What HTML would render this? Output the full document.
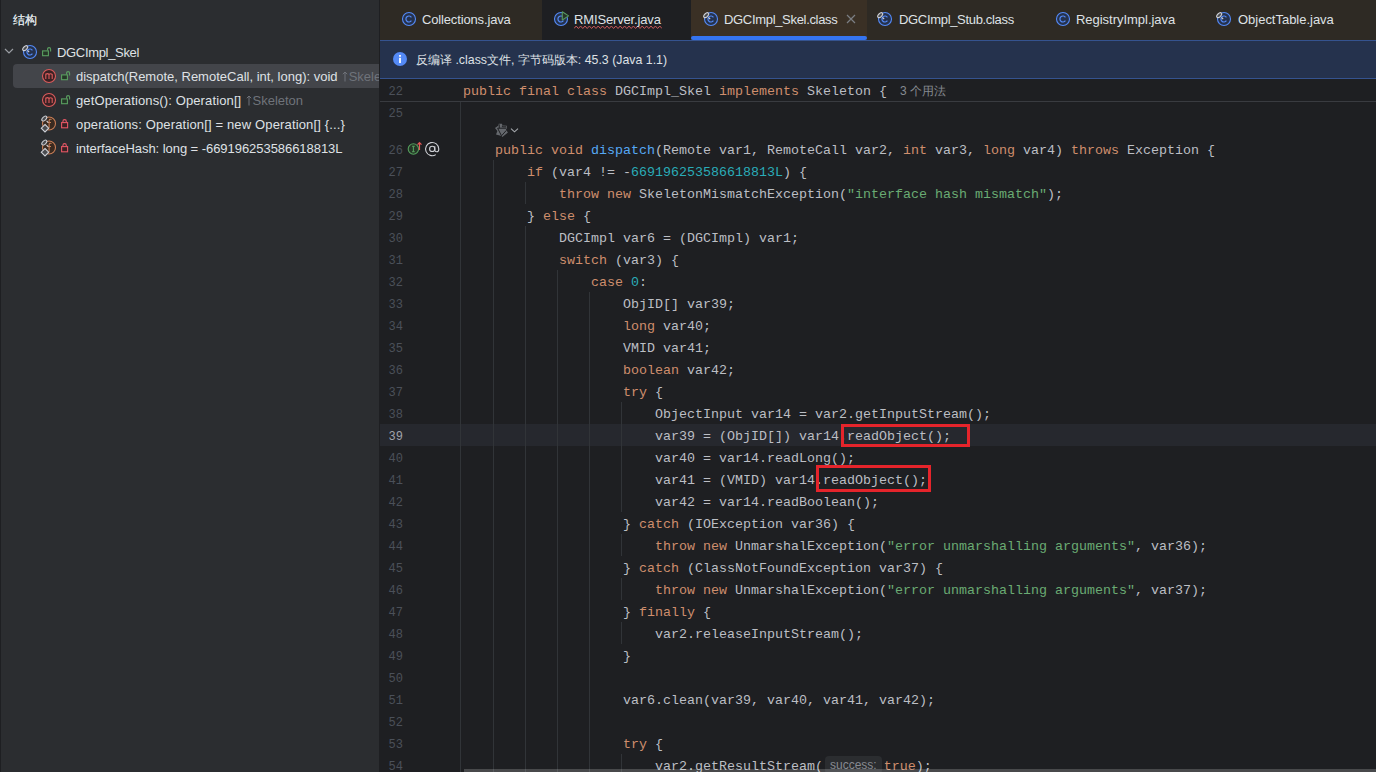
<!DOCTYPE html>
<html><head><meta charset="utf-8">
<style>
*{margin:0;padding:0;box-sizing:border-box}
html,body{width:1376px;height:772px;overflow:hidden;background:#1e1f22}
body{position:relative;font-family:"Liberation Sans",sans-serif}
.abs{position:absolute}
#left{position:absolute;left:0;top:0;width:379px;height:772px;background:#2b2d30;overflow:hidden}
#sep{position:absolute;left:379px;top:0;width:1px;height:772px;background:#1e1f22}
#tabs{position:absolute;left:380px;top:0;width:996px;height:40px;background:#2e2a24}
.tab{position:absolute;top:0;height:40px;font-size:13px;color:#dfe1e5;white-space:nowrap}
.tab .t{position:absolute;top:12px;line-height:15px;letter-spacing:-0.15px}
#banner{position:absolute;left:380px;top:40px;width:996px;height:39px;background:#25324d;border-top:1px solid #35538f;border-bottom:1px solid #35538f}
#editor{position:absolute;left:380px;top:79px;width:996px;height:693px;background:#1e1f22;overflow:hidden}
.ln{position:absolute;left:370px;width:33px;transform:scaleX(0.9);transform-origin:32px 0;text-align:right;font-family:"Liberation Mono",monospace;font-size:13.33px;color:#4b5059;line-height:22px}
.code{position:absolute;font-family:"Liberation Mono",monospace;font-size:13.33px;color:#bcbec4;line-height:22px;white-space:pre}
.k{color:#cf8e6d}.n{color:#2aacb8}.s{color:#6aab73}.m{color:#56a8f5}
.tree{position:absolute;font-size:13px;color:#dfe1e5;white-space:nowrap;line-height:16px}
.gray{color:#6f737a}
.g{position:absolute;width:1px;background:#313438}
.cur{color:#a1a3ab}
.hint{display:inline-block;vertical-align:top;font-family:"Liberation Sans",sans-serif;font-size:12px;color:#878a91;background:#2b2d30;border-radius:4px;padding:0 5.5px 0 5px;margin:0 1.5px 0 2px;line-height:18px}
</style></head><body>
<div id="left">
  <div class="abs" style="left:0;top:0;width:1px;height:772px;background:#1e1f22"></div>
  <div class="abs" style="left:13px;top:12px;font-size:12px;line-height:16px;color:#dfe1e5;text-shadow:0.3px 0 0 #dfe1e5">结构</div>
  <div class="abs" style="left:13px;top:64px;width:366px;height:24px;background:#43454a;border-radius:4px 0 0 4px"></div>
  <div class="tree" style="left:57px;top:45px;letter-spacing:-0.33px">DGCImpl_Skel</div>
  <div class="tree" style="left:76px;top:69px">dispatch(Remote, RemoteCall, int, long): void <span class="gray"><svg width="6" height="11" viewBox="0 0 6 11" style="display:inline-block;vertical-align:-1px;margin-left:1px;margin-right:0.5px"><path d="M3 10.5V1M0.8 3.2L3 1L5.2 3.2" fill="none" stroke="#6f737a" stroke-width="1"/></svg>Skeleton</span></div>
  <div class="tree" style="left:76px;top:93px"><span style="letter-spacing:0.125px">getOperations(): Operation[]</span> <span class="gray"><svg width="6" height="11" viewBox="0 0 6 11" style="display:inline-block;vertical-align:-1px;margin-left:1px;margin-right:0.5px"><path d="M3 10.5V1M0.8 3.2L3 1L5.2 3.2" fill="none" stroke="#6f737a" stroke-width="1"/></svg>Skeleton</span></div>
  <div class="tree" style="left:76px;top:117px;letter-spacing:0.15px">operations: Operation[] = new Operation[] {...}</div>
  <div class="tree" style="left:76px;top:141px;letter-spacing:-0.05px">interfaceHash: long = -669196253586618813L</div>
</div>
<div id="sep"></div>
<svg class="abs" style="left:4px;top:47px" width="10" height="8" viewBox="0 0 10 8"><path d="M1 2L5 6L9 2" fill="none" stroke="#9a9da3" stroke-width="1.2"/></svg>
<svg class="abs" style="left:22px;top:44px" width="18" height="18" viewBox="0 0 18 18"><circle cx="8" cy="8" r="6.5" fill="#25324d" stroke="#548af7" stroke-width="1.1"/><path d="M10.4 6.3A3 3 0 1 0 10.4 9.7" fill="none" stroke="#548af7" stroke-width="1.2"/><ellipse cx="3.2" cy="4.2" rx="3" ry="1.7" transform="rotate(-45 3.2 4.2)" fill="#4a4c50" stroke="#ced0d6" stroke-width="1.1"/><path d="M5.5 6.5L7.2 8.2" stroke="#ced0d6" stroke-width="1.1"/></svg>
<svg class="abs" style="left:42px;top:47px" width="10" height="10" viewBox="0 0 10 10"><rect x="0.6" y="3.9" width="5.8" height="4.8" fill="#253627" stroke="#5a9e60" stroke-width="1.1"/><path d="M5.6 3.6V2.2q0-1.6 1.5-1.6t1.5 1.6V4.4" fill="none" stroke="#5a9e60" stroke-width="1.1"/></svg>
<svg class="abs" style="left:41px;top:68px" width="16" height="16" viewBox="0 0 16 16"><circle cx="8" cy="8" r="6.5" fill="#3b2124" stroke="#db5c5c" stroke-width="1.1"/><path d="M4.8 11V5.5M4.8 6.5q1.6-1.6 3.2 0V11M8 6.5q1.6-1.6 3.2 0V11" fill="none" stroke="#db5c5c" stroke-width="1.1"/></svg>
<svg class="abs" style="left:61px;top:71px" width="10" height="10" viewBox="0 0 10 10"><rect x="0.6" y="3.9" width="5.8" height="4.8" fill="#253627" stroke="#5a9e60" stroke-width="1.1"/><path d="M5.6 3.6V2.2q0-1.6 1.5-1.6t1.5 1.6V4.4" fill="none" stroke="#5a9e60" stroke-width="1.1"/></svg>
<svg class="abs" style="left:41px;top:92px" width="16" height="16" viewBox="0 0 16 16"><circle cx="8" cy="8" r="6.5" fill="#3b2124" stroke="#db5c5c" stroke-width="1.1"/><path d="M4.8 11V5.5M4.8 6.5q1.6-1.6 3.2 0V11M8 6.5q1.6-1.6 3.2 0V11" fill="none" stroke="#db5c5c" stroke-width="1.1"/></svg>
<svg class="abs" style="left:61px;top:95px" width="10" height="10" viewBox="0 0 10 10"><rect x="0.6" y="3.9" width="5.8" height="4.8" fill="#253627" stroke="#5a9e60" stroke-width="1.1"/><path d="M5.6 3.6V2.2q0-1.6 1.5-1.6t1.5 1.6V4.4" fill="none" stroke="#5a9e60" stroke-width="1.1"/></svg>
<svg class="abs" style="left:40px;top:115px" width="18" height="20" viewBox="0 0 18 20"><circle cx="9" cy="8.5" r="6.5" fill="#3a2a20" stroke="#c77d55" stroke-width="1.1"/><path d="M11.5 4.5q-2-0.8-2.4 1V13M7.5 7.5h3.5" fill="none" stroke="#c77d55" stroke-width="1.1"/><ellipse cx="4.3" cy="3.6" rx="3" ry="1.7" transform="rotate(-45 4.3 3.6)" fill="#4a4c50" stroke="#ced0d6" stroke-width="1.1"/><path d="M6.6 5.9L8.3 7.6" stroke="#ced0d6" stroke-width="1.1"/><path d="M5 9.5L8.7 13.2L5 16.9L1.3 13.2Z" fill="#4a4c50" stroke="#ced0d6" stroke-width="1.1"/></svg>
<svg class="abs" style="left:61px;top:119px" width="8" height="10" viewBox="0 0 8 10"><rect x="0.6" y="3.6" width="6" height="5.2" fill="#3b2124" stroke="#e55765" stroke-width="1.1"/><path d="M1.9 3.6V2.4q0-1.8 1.7-1.8t1.7 1.8V3.6" fill="none" stroke="#e55765" stroke-width="1.1"/></svg>
<svg class="abs" style="left:40px;top:139px" width="18" height="20" viewBox="0 0 18 20"><circle cx="9" cy="8.5" r="6.5" fill="#3a2a20" stroke="#c77d55" stroke-width="1.1"/><path d="M11.5 4.5q-2-0.8-2.4 1V13M7.5 7.5h3.5" fill="none" stroke="#c77d55" stroke-width="1.1"/><ellipse cx="4.3" cy="3.6" rx="3" ry="1.7" transform="rotate(-45 4.3 3.6)" fill="#4a4c50" stroke="#ced0d6" stroke-width="1.1"/><path d="M6.6 5.9L8.3 7.6" stroke="#ced0d6" stroke-width="1.1"/><path d="M5 9.5L8.7 13.2L5 16.9L1.3 13.2Z" fill="#4a4c50" stroke="#ced0d6" stroke-width="1.1"/></svg>
<svg class="abs" style="left:61px;top:143px" width="8" height="10" viewBox="0 0 8 10"><rect x="0.6" y="3.6" width="6" height="5.2" fill="#3b2124" stroke="#e55765" stroke-width="1.1"/><path d="M1.9 3.6V2.4q0-1.8 1.7-1.8t1.7 1.8V3.6" fill="none" stroke="#e55765" stroke-width="1.1"/></svg>
<div id="tabs">
  <div class="tab" style="left:162px;width:149px;background:#1e1f22"></div>
  <div class="tab" style="left:311px;width:176px;background:#3a3025"></div>
  <div class="abs" style="left:311px;top:36px;width:176px;height:4px;background:#3574f0;border-radius:2px"></div>
  <svg class="abs" style="left:466px;top:14px" width="10" height="10" viewBox="0 0 10 10"><path d="M1 1L9 9M9 1L1 9" stroke="#7b7e84" stroke-width="1.2"/></svg>
<svg class="abs" style="left:194px;top:25px" width="88" height="5" viewBox="0 0 88 5"><path d="M0 3.5L2.2 1L4.4 3.5L6.6 1L8.8 3.5L11.0 1L13.2 3.5L15.4 1L17.6 3.5L19.8 1L22.0 3.5L24.2 1L26.4 3.5L28.6 1L30.8 3.5L33.0 1L35.2 3.5L37.4 1L39.6 3.5L41.8 1L44.0 3.5L46.2 1L48.4 3.5L50.6 1L52.8 3.5L55.0 1L57.2 3.5L59.4 1L61.6 3.5L63.8 1L66.0 3.5L68.2 1L70.4 3.5L72.6 1L74.8 3.5L77.0 1L79.2 3.5L81.4 1L83.6 3.5L85.8 1L88.0 3.5" fill="none" stroke="#c9585a" stroke-width="1"/></svg>
  <div class="tab" style="left:42px"><span class="t">Collections.java</span></div>
  <div class="tab" style="left:194px"><span class="t">RMIServer.java</span></div>
  <div class="tab" style="left:344px"><span class="t" style="letter-spacing:-0.32px">DGCImpl_Skel.class</span></div>
  <div class="tab" style="left:519px"><span class="t" style="letter-spacing:-0.32px">DGCImpl_Stub.class</span></div>
  <div class="tab" style="left:696px"><span class="t" style="letter-spacing:-0.03px">RegistryImpl.java</span></div>
  <div class="tab" style="left:858px"><span class="t" style="letter-spacing:-0.02px">ObjectTable.java</span></div>
</div>
<svg class="abs" style="left:401px;top:11px" width="18" height="18" viewBox="0 0 18 18"><circle cx="8" cy="8" r="6.5" fill="#25324d" stroke="#548af7" stroke-width="1.1"/><path d="M10.4 6.3A3 3 0 1 0 10.4 9.7" fill="none" stroke="#548af7" stroke-width="1.2"/></svg>
<svg class="abs" style="left:553px;top:11px" width="18" height="18" viewBox="0 0 18 18"><circle cx="8" cy="8" r="6.5" fill="#25324d" stroke="#548af7" stroke-width="1.1"/><path d="M10.4 6.3A3 3 0 1 0 10.4 9.7" fill="none" stroke="#548af7" stroke-width="1.2"/><path d="M9.3 0.8L15.6 4.9L9.3 9Z" fill="#263428" stroke="#57965c" stroke-width="1.1" stroke-linejoin="round"/></svg>
<svg class="abs" style="left:703px;top:11px" width="18" height="18" viewBox="0 0 18 18"><circle cx="8" cy="8" r="6.5" fill="#25324d" stroke="#548af7" stroke-width="1.1"/><path d="M10.4 6.3A3 3 0 1 0 10.4 9.7" fill="none" stroke="#548af7" stroke-width="1.2"/><ellipse cx="3.2" cy="4.2" rx="3" ry="1.7" transform="rotate(-45 3.2 4.2)" fill="#4a4c50" stroke="#ced0d6" stroke-width="1.1"/><path d="M5.5 6.5L7.2 8.2" stroke="#ced0d6" stroke-width="1.1"/></svg>
<svg class="abs" style="left:877px;top:11px" width="18" height="18" viewBox="0 0 18 18"><circle cx="8" cy="8" r="6.5" fill="#25324d" stroke="#548af7" stroke-width="1.1"/><path d="M10.4 6.3A3 3 0 1 0 10.4 9.7" fill="none" stroke="#548af7" stroke-width="1.2"/><ellipse cx="3.2" cy="4.2" rx="3" ry="1.7" transform="rotate(-45 3.2 4.2)" fill="#4a4c50" stroke="#ced0d6" stroke-width="1.1"/><path d="M5.5 6.5L7.2 8.2" stroke="#ced0d6" stroke-width="1.1"/></svg>
<svg class="abs" style="left:1055px;top:11px" width="18" height="18" viewBox="0 0 18 18"><circle cx="8" cy="8" r="6.5" fill="#25324d" stroke="#548af7" stroke-width="1.1"/><path d="M10.4 6.3A3 3 0 1 0 10.4 9.7" fill="none" stroke="#548af7" stroke-width="1.2"/></svg>
<svg class="abs" style="left:1216px;top:11px" width="18" height="18" viewBox="0 0 18 18"><circle cx="8" cy="8" r="6.5" fill="#25324d" stroke="#548af7" stroke-width="1.1"/><path d="M10.4 6.3A3 3 0 1 0 10.4 9.7" fill="none" stroke="#548af7" stroke-width="1.2"/><ellipse cx="3.2" cy="4.2" rx="3" ry="1.7" transform="rotate(-45 3.2 4.2)" fill="#4a4c50" stroke="#ced0d6" stroke-width="1.1"/><path d="M5.5 6.5L7.2 8.2" stroke="#ced0d6" stroke-width="1.1"/></svg>
<div id="banner">
  <svg class="abs" style="left:13px;top:11px" width="14" height="14" viewBox="0 0 14 14"><circle cx="7" cy="7" r="7" fill="#548af7"/><rect x="6.1" y="3" width="1.8" height="1.8" fill="#fff"/><rect x="6.1" y="5.8" width="1.8" height="5.2" fill="#fff"/></svg>
  <div class="abs" style="left:36px;top:11px;font-size:12.35px;color:#dfe1e5;white-space:nowrap">反编译 .class文件, 字节码版本: 45.3 (Java 1.1)</div>
</div>
<div class="abs" style="left:380px;top:424px;width:996px;height:22px;background:#26282e"></div>
<div class="abs" style="left:380px;top:101px;width:996px;height:1px;background:#393b40"></div>
<div class="g" style="left:460px;top:102px;height:670px"></div>
<div class="g" style="left:493px;top:160px;height:612px"></div>
<div class="g" style="left:525px;top:182px;height:22px"></div>
<div class="g" style="left:525px;top:226px;height:546px"></div>
<div class="g" style="left:557px;top:270px;height:502px"></div>
<div class="g" style="left:589px;top:292px;height:480px"></div>
<div class="g" style="left:621px;top:402px;height:110px"></div>
<div class="g" style="left:621px;top:534px;height:22px"></div>
<div class="g" style="left:621px;top:578px;height:22px"></div>
<div class="g" style="left:621px;top:622px;height:22px"></div>
<div class="g" style="left:621px;top:754px;height:18px"></div>
<div class="ln" style="top:81px">22</div>
<div class="code" style="top:81px;left:463px"><span class="k">public final class</span> DGCImpl_Skel <span class="k">implements</span> Skeleton {</div>
<div class="ln" style="top:103px">25</div>
<div class="ln" style="top:140px">26</div>
<div class="code" style="top:140px;left:495px"><span class="k">public void</span> <span class="m">dispatch</span>(Remote var1, RemoteCall var2, <span class="k">int</span> var3, <span class="k">long</span> var4) <span class="k">throws</span> Exception {</div>
<div class="ln" style="top:162px">27</div>
<div class="code" style="top:162px;left:527px"><span class="k">if</span> (var4 != -<span class="n">669196253586618813L</span>) {</div>
<div class="ln" style="top:184px">28</div>
<div class="code" style="top:184px;left:559px"><span class="k">throw new</span> SkeletonMismatchException(<span class="s">"interface hash mismatch"</span>);</div>
<div class="ln" style="top:206px">29</div>
<div class="code" style="top:206px;left:527px">} <span class="k">else</span> {</div>
<div class="ln" style="top:228px">30</div>
<div class="code" style="top:228px;left:559px">DGCImpl var6 = (DGCImpl) var1;</div>
<div class="ln" style="top:250px">31</div>
<div class="code" style="top:250px;left:559px"><span class="k">switch</span> (var3) {</div>
<div class="ln" style="top:272px">32</div>
<div class="code" style="top:272px;left:591px"><span class="k">case</span> <span class="n">0</span>:</div>
<div class="ln" style="top:294px">33</div>
<div class="code" style="top:294px;left:623px">ObjID[] var39;</div>
<div class="ln" style="top:316px">34</div>
<div class="code" style="top:316px;left:623px"><span class="k">long</span> var40;</div>
<div class="ln" style="top:338px">35</div>
<div class="code" style="top:338px;left:623px">VMID var41;</div>
<div class="ln" style="top:360px">36</div>
<div class="code" style="top:360px;left:623px"><span class="k">boolean</span> var42;</div>
<div class="ln" style="top:382px">37</div>
<div class="code" style="top:382px;left:623px"><span class="k">try</span> {</div>
<div class="ln" style="top:404px">38</div>
<div class="code" style="top:404px;left:655px">ObjectInput var14 = var2.getInputStream();</div>
<div class="ln cur" style="top:426px">39</div>
<div class="code" style="top:426px;left:655px">var39 = (ObjID[]) var14.readObject();</div>
<div class="ln" style="top:448px">40</div>
<div class="code" style="top:448px;left:655px">var40 = var14.readLong();</div>
<div class="ln" style="top:470px">41</div>
<div class="code" style="top:470px;left:655px">var41 = (VMID) var14.readObject();</div>
<div class="ln" style="top:492px">42</div>
<div class="code" style="top:492px;left:655px">var42 = var14.readBoolean();</div>
<div class="ln" style="top:514px">43</div>
<div class="code" style="top:514px;left:623px">} <span class="k">catch</span> (IOException var36) {</div>
<div class="ln" style="top:536px">44</div>
<div class="code" style="top:536px;left:655px"><span class="k">throw new</span> UnmarshalException(<span class="s">"error unmarshalling arguments"</span>, var36);</div>
<div class="ln" style="top:558px">45</div>
<div class="code" style="top:558px;left:623px">} <span class="k">catch</span> (ClassNotFoundException var37) {</div>
<div class="ln" style="top:580px">46</div>
<div class="code" style="top:580px;left:655px"><span class="k">throw new</span> UnmarshalException(<span class="s">"error unmarshalling arguments"</span>, var37);</div>
<div class="ln" style="top:602px">47</div>
<div class="code" style="top:602px;left:623px">} <span class="k">finally</span> {</div>
<div class="ln" style="top:624px">48</div>
<div class="code" style="top:624px;left:655px">var2.releaseInputStream();</div>
<div class="ln" style="top:646px">49</div>
<div class="code" style="top:646px;left:623px">}</div>
<div class="ln" style="top:668px">50</div>
<div class="ln" style="top:690px">51</div>
<div class="code" style="top:690px;left:623px">var6.clean(var39, var40, var41, var42);</div>
<div class="ln" style="top:712px">52</div>
<div class="ln" style="top:734px">53</div>
<div class="code" style="top:734px;left:623px"><span class="k">try</span> {</div>
<div class="ln" style="top:756px">54</div>
<div class="code" style="top:756px;left:655px">var2.getResultStream(<span class="hint">success:</span><span class="k">true</span>);</div>

<div class="abs" style="left:900px;top:84px;font-size:12px;color:#868a91;white-space:nowrap;line-height:14px">3 个用法</div>
<div class="abs" style="left:841px;top:424px;width:129px;height:23px;border:3px solid #e5242b"></div>
<div class="abs" style="left:816px;top:465px;width:115px;height:27px;border:3px solid #e5242b"></div>
<div class="abs" style="left:464px;top:769px;width:912px;height:3px;background:rgba(255,255,255,0.19)"></div>
<svg class="abs" style="left:404px;top:138px" width="40" height="20" viewBox="0 0 40 20">
 <circle cx="9.4" cy="11" r="5.2" fill="#253627" stroke="#549d5c" stroke-width="1.1"/>
 <path d="M8 8.3h2.8M9.4 8.3v5.4M8 13.7h2.8" stroke="#549d5c" stroke-width="1.1" fill="none"/>
 <path d="M15.5 12V4.7M13.5 6.7L15.5 4.7L17.5 6.7" stroke="#e55757" stroke-width="1.2" fill="none"/>
 <circle cx="28.2" cy="10.9" r="2.6" stroke="#ced0d6" stroke-width="1.1" fill="none"/>
 <path d="M30.8 8.2V12q0 1.8 1.9 1.8q2.1 0 2.1-2.9A6.6 6.6 0 1 0 31.8 16.6" stroke="#ced0d6" stroke-width="1.1" fill="none"/>
</svg>
<svg class="abs" style="left:494px;top:122px" width="26" height="16" viewBox="0 0 26 16">
 <path d="M4.8 1.8L7.9 1.8L8.6 3.6L12.9 3.7L12.9 6.6L11.9 7.6L13.9 10.5L8.4 14.9L7.6 13.9L2 12.6L3.4 9L1 6L4.2 3.8Z" fill="#65686d"/>
 <path d="M3.6 6.2H12.4M3.6 6.2L7.5 13.8M12.3 8.4L7.5 13.8M5.2 2.3L5.3 6.2M8.4 3.6V4.8H12.2" stroke="#1e1f22" stroke-width="1" fill="none"/>
 <path d="M17 6.6L20.5 9.9L24 6.6" fill="none" stroke="#a8abb0" stroke-width="1.05"/>
</svg>


</body></html>
